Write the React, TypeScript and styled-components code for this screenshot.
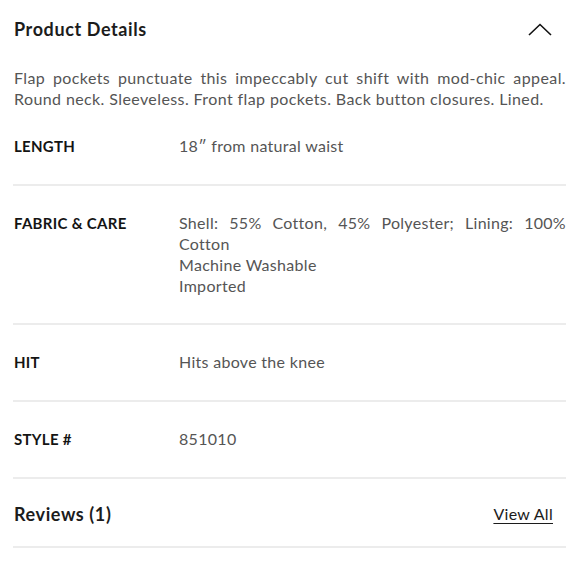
import React from 'react';
import styled, { createGlobalStyle } from 'styled-components';

const GlobalStyle = createGlobalStyle`
    body {
        margin: 0;
        background: #fff;
        font-family: Lato, "Noto Sans", sans-serif;
    }
`;

const Panel = styled.section`
    padding: 0 14px 0 13px;
    color: #555;
`;

const Header = styled.div`
    display: flex;
    align-items: center;
    justify-content: space-between;
    height: 58px;
    padding-left: 1px;
`;

const Title = styled.h2`
    margin: 0;
    font-size: 18px;
    font-weight: 700;
    color: #1c1c1c;
    letter-spacing: 0.6px;
`;

const Toggle = styled.button`
    border: 0;
    background: none;
    padding: 0;
    margin-right: 14px;
    display: flex;
    cursor: pointer;
`;

const Description = styled.p`
    margin: 9px 0 0;
    padding-left: 1px;
    font-size: 16px;
    line-height: 21px;
    text-align: justify;
    letter-spacing: 0.4px;
`;

const Row = styled.div`
    display: grid;
    grid-template-columns: 166px 1fr;
    padding: 27px 0;
    border-bottom: 2px solid #ececec;
    line-height: 21px;
`;

const Label = styled.div`
    padding-left: 1px;
    font-size: 15px;
    font-weight: 700;
    color: #141414;
    text-transform: uppercase;
    letter-spacing: 0.3px;
`;

const Value = styled.div`
    margin-top: -1px;
    font-size: 16px;
    text-align: justify;
    letter-spacing: 0.3px;
`;

const ReviewsRow = styled.div`
    display: flex;
    align-items: center;
    justify-content: space-between;
    padding: 24px 13px 21px 1px;
    border-bottom: 2px solid #ececec;
    line-height: 22px;
`;

const ViewAll = styled.a`
    font-size: 16px;
    color: #1c1c1c;
    text-decoration: underline;
    text-underline-offset: 3px;
    letter-spacing: 0.3px;
`;

type Detail = {
    label: string;
    lines: string[];
};

const details: Detail[] = [
    { label: 'Length', lines: ['18″ from natural waist'] },
    {
        label: 'Fabric & Care',
        lines: ['Shell: 55% Cotton, 45% Polyester; Lining: 100% Cotton', 'Machine Washable', 'Imported'],
    },
    { label: 'Hit', lines: ['Hits above the knee'] },
    { label: 'Style #', lines: ['851010'] },
];

export default function App() {
    return (
        <Panel>
            <GlobalStyle />
            <Header>
                <Title>Product Details</Title>
                <Toggle aria-label="Collapse">
                    <svg width="24" height="13" viewBox="0 0 24 13" fill="none">
                        <path d="M1 12L12 1.5L23 12" stroke="#111" strokeWidth="1.6" />
                    </svg>
                </Toggle>
            </Header>
            <Description>
                Flap pockets punctuate this impeccably cut shift with mod-chic appeal. Round neck. Sleeveless. Front flap pockets. Back button closures. Lined.
            </Description>
            {details.map((d) => (
                <Row key={d.label}>
                    <Label>{d.label}</Label>
                    <Value>
                        {d.lines.map((l) => (
                            <div key={l}>{l}</div>
                        ))}
                    </Value>
                </Row>
            ))}
            <ReviewsRow>
                <Title>Reviews (1)</Title>
                <ViewAll href="#">View All</ViewAll>
            </ReviewsRow>
        </Panel>
    );
}
